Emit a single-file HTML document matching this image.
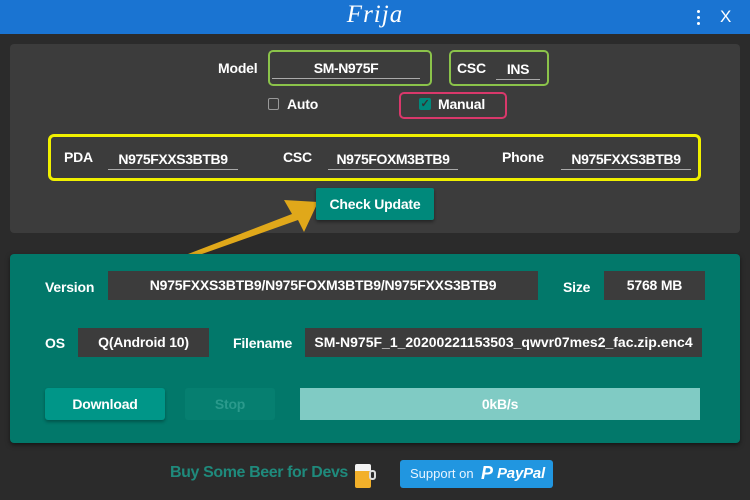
<!DOCTYPE html>
<html><head><meta charset="utf-8"><style>
*{margin:0;padding:0;box-sizing:border-box}
body{width:750px;height:500px;background:#2b2b2b;position:relative;overflow:hidden;font-family:"Liberation Sans",sans-serif;font-weight:bold;color:#fff;font-size:14px;letter-spacing:-0.2px}
.a{position:absolute}
.lbl{position:absolute;font-size:14px;line-height:16px}
.fld{position:absolute;border-bottom:1px solid #aaa;text-align:center;font-size:14px;line-height:20px;letter-spacing:-0.4px}
.box{position:absolute;background:#3c3c3c;text-align:center;font-size:14px;line-height:29px}
</style></head><body>
<div class="a" style="left:0;top:0;width:750px;height:34px;background:#1a74d2"></div>
<div class="a" style="left:0;top:1px;width:750px;text-align:center;font-family:'Liberation Serif',serif;font-style:italic;font-weight:normal;font-size:25px;color:#fff;letter-spacing:1px">Frija</div>
<div class="a" style="left:697px;top:10px;width:3px;height:3px;background:#fff;border-radius:2px"></div>
<div class="a" style="left:697px;top:16px;width:3px;height:3px;background:#fff;border-radius:2px"></div>
<div class="a" style="left:697px;top:22px;width:3px;height:3px;background:#fff;border-radius:2px"></div>
<div class="a" style="left:720px;top:7px;font-weight:normal;font-size:17px">X</div>

<div class="a" style="left:10px;top:44px;width:730px;height:189px;background:#3c3c3c;border-radius:4px"></div>
<div class="lbl" style="left:218px;top:60px">Model</div>
<div class="a" style="left:268px;top:50px;width:164px;height:36px;border:2px solid #8bc34a;border-radius:5px"></div>
<div class="fld" style="left:272px;top:58px;width:148px">SM-N975F</div>
<div class="a" style="left:449px;top:50px;width:100px;height:36px;border:2px solid #8bc34a;border-radius:5px"></div>
<div class="lbl" style="left:457px;top:60px">CSC</div>
<div class="fld" style="left:496px;top:59px;width:44px">INS</div>
<div class="a" style="left:268px;top:98px;width:11px;height:12px;border:1px solid #999;border-radius:2px"></div>
<div class="lbl" style="left:287px;top:96px">Auto</div>
<div class="a" style="left:399px;top:92px;width:108px;height:27px;border:2px solid #d9386b;border-radius:5px"></div>
<div class="a" style="left:419px;top:98px;width:12px;height:12px;background:#00897b;border-radius:2px;color:#333;font-size:11px;line-height:12px;text-align:center">✓</div>
<div class="lbl" style="left:438px;top:96px">Manual</div>
<div class="a" style="left:48px;top:134px;width:653px;height:47px;border:3px solid #f0f000;border-radius:6px"></div>
<div class="lbl" style="left:64px;top:149px">PDA</div>
<div class="fld" style="left:108px;top:149px;width:130px">N975FXXS3BTB9</div>
<div class="lbl" style="left:283px;top:149px">CSC</div>
<div class="fld" style="left:328px;top:149px;width:130px">N975FOXM3BTB9</div>
<div class="lbl" style="left:502px;top:149px">Phone</div>
<div class="fld" style="left:561px;top:149px;width:130px">N975FXXS3BTB9</div>
<svg class="a" style="left:180px;top:188px" width="150" height="72"><polygon points="8,66 112,26 104,12 138,14 124,44 118,32 22,66" fill="#e0a81a"/></svg>
<div class="a" style="left:316px;top:188px;width:118px;height:32px;background:#00897b;border-radius:2px;text-align:center;line-height:32px;box-shadow:0 2px 3px rgba(0,0,0,.4)">Check Update</div>

<div class="a" style="left:10px;top:254px;width:730px;height:189px;background:#02786a;border-radius:4px;box-shadow:0 2px 5px rgba(0,0,0,.5)"></div>
<div class="lbl" style="left:45px;top:279px">Version</div>
<div class="box" style="left:108px;top:271px;width:430px">N975FXXS3BTB9/N975FOXM3BTB9/N975FXXS3BTB9</div>
<div class="lbl" style="left:563px;top:279px">Size</div>
<div class="box" style="left:604px;top:271px;width:101px">5768 MB</div>
<div class="lbl" style="left:45px;top:335px">OS</div>
<div class="box" style="left:78px;top:328px;width:131px">Q(Android 10)</div>
<div class="lbl" style="left:233px;top:335px">Filename</div>
<div class="box" style="left:305px;top:328px;width:397px;letter-spacing:0">SM-N975F_1_20200221153503_qwvr07mes2_fac.zip.enc4</div>
<div class="a" style="left:45px;top:388px;width:120px;height:32px;background:#009688;border-radius:3px;text-align:center;line-height:32px;box-shadow:0 2px 3px rgba(0,0,0,.3)">Download</div>
<div class="a" style="left:185px;top:388px;width:90px;height:32px;background:#067f70;border-radius:3px;text-align:center;line-height:32px;color:#2a9a8c">Stop</div>
<div class="a" style="left:300px;top:388px;width:400px;height:32px;background:#80cbc4;text-align:center;line-height:32px">0kB/s</div>

<div class="a" style="left:170px;top:464px;font-size:16px;letter-spacing:-0.4px;color:#1f8a7c">Buy Some Beer for Devs</div>
<div class="a" style="left:355px;top:464px;width:16px;height:24px;background:#f2b02a;border-radius:2px;border-top:7px solid #f3f3f3"></div>
<div class="a" style="left:369px;top:470px;width:7px;height:10px;border:2px solid #ddd;border-radius:3px"></div>
<div class="a" style="left:400px;top:460px;width:153px;height:28px;background:#2196e0;border-radius:3px"></div>
<div class="a" style="left:410px;top:466px;font-weight:normal;font-size:13px;color:#e8f4ff;letter-spacing:0">Support on</div>
<div class="a" style="left:481px;top:463px;font-style:italic;font-size:18px;color:#fff">P</div>
<div class="a" style="left:497px;top:465px;font-style:italic;font-size:15px;color:#fff">PayPal</div>
</body></html>
